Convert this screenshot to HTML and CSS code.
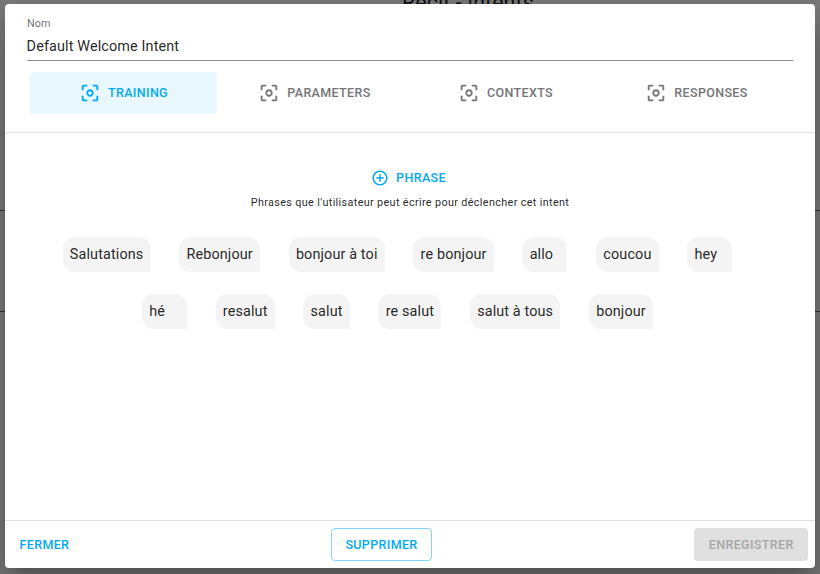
FILE: index.html
```html
<!DOCTYPE html>
<html lang="fr">
<head>
<meta charset="utf-8">
<title>Intents</title>
<link rel="stylesheet" href="styles.css">
</head>
<body>
<svg class="defs" aria-hidden="true">
  <symbol id="focus" viewBox="0 0 24 24"><path d="M5 15H3v4c0 1.1.9 2 2 2h4v-2H5v-4zM5 5h4V3H5c-1.1 0-2 .9-2 2v4h2V5zm14-2h-4v2h4v4h2V5c0-1.1-.9-2-2-2zm0 16h-4v2h4c1.1 0 2-.9 2-2v-4h-2v4zM12 8c-2.21 0-4 1.79-4 4s1.79 4 4 4 4-1.79 4-4-1.79-4-4-4zm0 6c-1.1 0-2-.9-2-2s.9-2 2-2 2 .9 2 2-.9 2-2 2z"/></symbol>
</svg>
<div class="backdrop">
  <h1 class="page-title">Récit - Intents</h1>
  <div class="line line-a"></div>
  <div class="line line-b"></div>
</div>
<main class="dialog">
  <header class="head">
    <div class="field">
      <label class="label">Nom</label>
      <div class="value">Default Welcome Intent</div>
    </div>
    <nav class="tabs">
      <button class="tab active"><svg><use href="#focus"/></svg><span>TRAINING</span></button>
      <button class="tab"><svg><use href="#focus"/></svg><span>PARAMETERS</span></button>
      <button class="tab"><svg><use href="#focus"/></svg><span>CONTEXTS</span></button>
      <button class="tab"><svg><use href="#focus"/></svg><span>RESPONSES</span></button>
    </nav>
  </header>
  <section class="content">
    <button class="add"><svg viewBox="0 0 24 24"><path d="M13 7h-2v4H7v2h4v4h2v-4h4v-2h-4V7zm-1-5C6.480 2 2 6.480 2 12s4.480 10 10 10 10-4.480 10-10S17.520 2 12 2zm0 18c-4.410 0-8-3.590-8-8s3.590-8 8-8 8 3.590 8 8-3.590 8-8 8z"/></svg><span>PHRASE</span></button>
    <p class="hint">Phrases que l'utilisateur peut écrire pour déclencher cet intent</p>
    <div class="chips">
      <span class="chip">Salutations</span>
      <span class="chip">Rebonjour</span>
      <span class="chip">bonjour à toi</span>
      <span class="chip">re bonjour</span>
      <span class="chip">allo</span>
      <span class="chip">coucou</span>
      <span class="chip">hey</span>
      <span class="chip">hé</span>
      <span class="chip">resalut</span>
      <span class="chip">salut</span>
      <span class="chip">re salut</span>
      <span class="chip">salut à tous</span>
      <span class="chip">bonjour</span>
    </div>
  </section>
  <footer class="foot">
    <button class="btn text">FERMER</button>
    <button class="btn outlined">SUPPRIMER</button>
    <button class="btn disabled" disabled>ENREGISTRER</button>
  </footer>
</main>
</body>
</html>
```
FILE: styles.css
```css
* { box-sizing: border-box; }
body {
  margin: 0;
  height: 574px;
  padding: 4px 5px 6px;
  overflow: hidden;
  background: #7b7b7b;
  font-family: Roboto, "Liberation Sans", sans-serif;
  color: rgba(0, 0, 0, .87);
}
button { border: 0; margin: 0; background: none; font: inherit; color: inherit; }
svg { fill: currentColor; flex: none; }
.defs { position: absolute; width: 0; height: 0; }
.backdrop { position: absolute; inset: 0; overflow: hidden; }
.page-title {
  position: absolute;
  left: 402px;
  top: -9px;
  margin: 0;
  font-size: 21.4px;
  line-height: 24px;
  font-weight: 400;
  letter-spacing: .1px;
  white-space: nowrap;
  color: #111;
}
.line { position: absolute; left: 0; right: 0; height: 1px; background: #333; }
.line-a { top: 210px; }
.line-b { top: 311px; }
.dialog {
  position: relative;
  display: flex;
  flex-direction: column;
  height: 564px;
  background: #fff;
  border-radius: 4px;
  box-shadow: 0 11px 15px -7px rgba(0,0,0,.2), 0 24px 38px 3px rgba(0,0,0,.14), 0 9px 46px 8px rgba(0,0,0,.12);
}
.head { height: 129px; padding: 12px 22px 0; border-bottom: 1px solid #e0e0e0; }
.field { height: 45px; border-bottom: 1px solid #8c8c8c; }
.label { display: block; font-size: 10.8px; line-height: 15px; letter-spacing: .1px; color: rgba(0,0,0,.6); }
.value { margin: 6px 0 0 -.4px; font-size: 14.4px; line-height: 20px; letter-spacing: .13px; }
.tabs { display: grid; grid-template-columns: repeat(4, 187px); gap: 4px; padding: 11px 3px 0; }
.tab {
  display: flex;
  align-items: center;
  justify-content: center;
  gap: 7px;
  height: 42px;
  padding: 0;
  border-radius: 4px;
  font-size: 12.5px;
  line-height: 22px;
  font-weight: 500;
  letter-spacing: .357px;
  color: #757575;
}
.tab svg { width: 22px; height: 22px; }
.tab.active { color: #03a9f4; background: #e9f7fe; }
.content { flex: 1; display: flex; flex-direction: column; align-items: center; padding-top: 34px; }
.add {
  display: flex;
  align-items: center;
  gap: 7px;
  height: 22px;
  padding: 0;
  margin-right: 3px;
  font-size: 12.5px;
  line-height: 22px;
  font-weight: 500;
  letter-spacing: .357px;
  color: #03a9f4;
}
.add svg { width: 18px; height: 18px; }
.hint { margin: 6px 0 0; font-size: 10.8px; line-height: 16px; letter-spacing: .36px; }
.chips { display: flex; flex-wrap: wrap; justify-content: center; gap: 22px 28.7px; width: 700px; margin: 26px 25px 0 0; }
.chip {
  min-width: 45px;
  height: 35px;
  padding: 0 7.2px;
  border-radius: 12px 12px 0 12px;
  background: #f4f4f4;
  font-size: 14.4px;
  line-height: 35px;
  letter-spacing: .13px;
  white-space: nowrap;
}
.foot {
  display: grid;
  grid-template-columns: 1fr auto 1fr;
  align-items: center;
  height: 48px;
  padding: 0 7px;
  border-top: 1px solid #e0e0e0;
}
.btn { height: 33px; border-radius: 4px; font-size: 12.5px; font-weight: 500; letter-spacing: .357px; color: #03a9f4; }
.text { justify-self: start; padding: 0 7.5px; }
.outlined { margin-right: 57px; padding: 0 13.4px; border: 1px solid #81d4fa; }
.disabled { justify-self: end; padding: 0 14.4px; background: #e0e0e0; color: #a6a6a6; }
```
